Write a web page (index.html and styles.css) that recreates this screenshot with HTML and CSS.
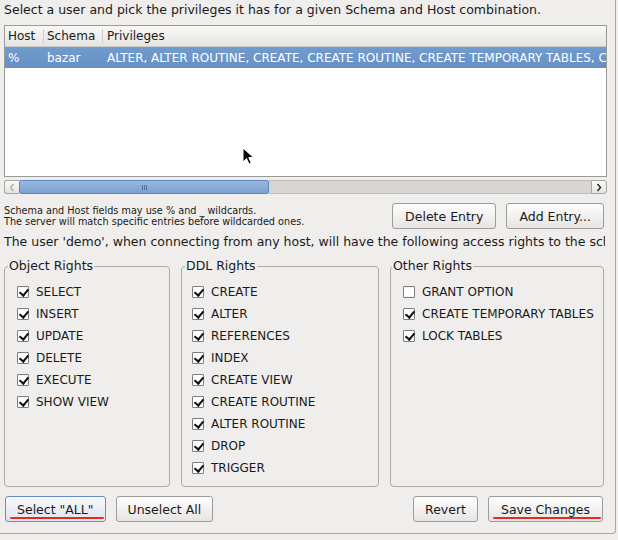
FILE: index.html
```html
<!DOCTYPE html>
<html>
<head>
<meta charset="utf-8">
<link rel="stylesheet" href="styles.css">
</head>
<body>
<div class="frame">
  <p class="intro">Select a user and pick the privileges it has for a given Schema and Host combination.</p>

  <div class="list">
    <div class="list-head">
      <div class="col col-host">Host</div>
      <div class="col col-schema">Schema</div>
      <div class="col col-priv">Privileges</div>
    </div>
    <div class="list-row selected">
      <div class="col col-host">%</div>
      <div class="col col-schema">bazar</div>
      <div class="col col-priv">ALTER, ALTER ROUTINE, CREATE, CREATE ROUTINE, CREATE TEMPORARY TABLES, CREATE VIEW, DELETE</div>
    </div>
    <svg class="cursor" width="13" height="19" viewBox="0 0 13 19"><path d="M1 1 L1 15 L4.5 11.5 L7 17 L9.2 16 L6.8 10.6 L11.5 10.6 Z" fill="#000" stroke="#fff" stroke-width="1" stroke-linejoin="round"/></svg>
  </div>

  <div class="hscroll">
    <div class="sb-btn sb-left"><svg width="6" height="9" viewBox="0 0 6 9"><path d="M4.5 1 L1.5 4.5 L4.5 8" fill="none" stroke="#a9a9a9" stroke-width="1.2"/></svg></div>
    <div class="sb-thumb"><span class="grip"></span><span class="grip"></span><span class="grip"></span></div>
    <div class="sb-trough"></div>
    <div class="sb-btn sb-right"><svg width="6" height="9" viewBox="0 0 6 9"><path d="M1.5 1 L4.5 4.5 L1.5 8" fill="none" stroke="#222" stroke-width="1.4"/></svg></div>
  </div>

  <div class="entry-row">
    <p class="hint">Schema and Host fields may use % and _ wildcards.<br>The server will match specific entries before wildcarded ones.</p>
    <div class="btns">
      <button class="btn">Delete Entry</button>
      <button class="btn">Add Entry...</button>
    </div>
  </div>

  <p class="summary">The user 'demo', when connecting from any host, will have the following access rights to the schema 'bazar':</p>

  <div class="groups">
    <fieldset class="group g-object">
      <legend>Object Rights</legend>
      <label class="chk"><span class="box on"></span>SELECT</label>
      <label class="chk"><span class="box on"></span>INSERT</label>
      <label class="chk"><span class="box on"></span>UPDATE</label>
      <label class="chk"><span class="box on"></span>DELETE</label>
      <label class="chk"><span class="box on"></span>EXECUTE</label>
      <label class="chk"><span class="box on"></span>SHOW VIEW</label>
    </fieldset>
    <fieldset class="group g-ddl">
      <legend>DDL Rights</legend>
      <label class="chk"><span class="box on"></span>CREATE</label>
      <label class="chk"><span class="box on"></span>ALTER</label>
      <label class="chk"><span class="box on"></span>REFERENCES</label>
      <label class="chk"><span class="box on"></span>INDEX</label>
      <label class="chk"><span class="box on"></span>CREATE VIEW</label>
      <label class="chk"><span class="box on"></span>CREATE ROUTINE</label>
      <label class="chk"><span class="box on"></span>ALTER ROUTINE</label>
      <label class="chk"><span class="box on"></span>DROP</label>
      <label class="chk"><span class="box on"></span>TRIGGER</label>
    </fieldset>
    <fieldset class="group g-other">
      <legend>Other Rights</legend>
      <label class="chk"><span class="box"></span>GRANT OPTION</label>
      <label class="chk"><span class="box on"></span>CREATE TEMPORARY TABLES</label>
      <label class="chk"><span class="box on"></span>LOCK TABLES</label>
    </fieldset>
  </div>

  <div class="bottom-bar">
    <div class="btns">
      <button class="btn btn-sm focused marked">Select "ALL"</button>
      <button class="btn btn-sm">Unselect All</button>
    </div>
    <div class="btns">
      <button class="btn btn-sm">Revert</button>
      <button class="btn marked">Save Changes</button>
    </div>
  </div>
</div>
</body>
</html>
```

FILE: styles.css
```css
* { box-sizing: border-box; }

html, body {
  margin: 0;
  padding: 0;
  background: #efeeec;
  font-family: "DejaVu Sans", sans-serif;
  font-size: 12.5px;
  color: #1a1a1a;
  overflow: hidden;
}

.frame {
  width: 616px;
  height: 534px;
  padding: 0 8px 0 4px;
  border-right: 1px solid #a9a7a4;
  border-bottom: 1px solid #a9a7a4;
  border-bottom-right-radius: 4px;
  overflow: hidden;
}

.intro {
  margin: 1px 0 0;
  line-height: 17px;
  white-space: nowrap;
}

.list {
  position: relative;
  margin-top: 7px;
  height: 152px;
  border: 1px solid #9c9a97;
  background: #fff;
  overflow: hidden;
  font-size: 12px;
}

.list-head, .list-row {
  display: flex;
  height: 21px;
  align-items: center;
  white-space: nowrap;
}

.list-head {
  background: linear-gradient(#f8f8f7, #e6e5e3);
  border-bottom: 1px solid #cfcdca;
}

.list-head .col + .col {
  border-left: 1px solid #cfcdca;
  height: 14px;
  line-height: 14px;
}

.col { flex: none; padding-left: 3px; }
.col-host { width: 38px; }
.col-schema { width: 59px; }
.col-priv { flex: 1; min-width: 0; padding-left: 4px; overflow: hidden; }

.list-row .col-schema { padding-left: 4px; }
.list-row .col-priv { padding-left: 5px; }

.list-row.selected {
  background: linear-gradient(#729bcd, #6690c5);
  color: #fff;
}

.cursor {
  position: absolute;
  left: 237px;
  top: 121px;
}

.hscroll {
  display: flex;
  margin-top: 3px;
  height: 14px;
}

.sb-btn {
  flex: none;
  width: 16px;
  height: 14px;
  display: flex;
  align-items: center;
  justify-content: center;
  background: linear-gradient(#fbfbfa, #e3e2e0);
  border: 1px solid #a8a6a3;
}
.sb-left { border-radius: 3px 0 0 3px; width: 15px; border-right: none; }
.sb-right { border-radius: 0 3px 3px 0; }

.sb-thumb {
  flex: none;
  width: 250px;
  height: 14px;
  background: linear-gradient(#9ab8e0, #7aa1d3);
  border: 1px solid #5f87bd;
  border-radius: 2px;
  display: flex;
  align-items: center;
  justify-content: center;
  gap: 1px;
}
.grip {
  width: 1px;
  height: 5px;
  background: #4b6f9f;
}

.sb-trough {
  flex: 1;
  background: #d7d6d3;
  border-top: 1px solid #bdbbb8;
  border-bottom: 1px solid #bdbbb8;
}

.entry-row {
  display: flex;
  justify-content: space-between;
  align-items: center;
  margin-top: 9px;
  padding-right: 3px;
}

.hint {
  margin: 0;
  font-size: 9.7px;
  line-height: 11px;
}

.btns {
  display: flex;
  gap: 10px;
}

.btn {
  position: relative;
  height: 26px;
  padding: 0 12px;
  font-family: "DejaVu Sans", sans-serif;
  font-size: 12.5px;
  color: #1a1a1a;
  background: linear-gradient(#fdfdfd, #e6e5e3);
  border: 1px solid #9f9d9a;
  border-radius: 3px;
}

.btn-sm { padding: 0 11px; }

.btn.focused {
  border-color: #6a8fc3;
  background: linear-gradient(#f6f8fb, #dfe4ec);
}

.btn.marked::after {
  content: "";
  position: absolute;
  left: 4px;
  right: 1px;
  bottom: 2px;
  height: 2px;
  background: #e52a25;
  border-radius: 1px;
}

.summary {
  margin: 5px 2px 0 0;
  line-height: 16px;
  white-space: nowrap;
  overflow: hidden;
}

.groups {
  display: flex;
  gap: 11px;
  margin-top: 9px;
  height: 228px;
}

.group {
  margin: 0;
  padding: 8px 0 0 12px;
  border: 1px solid #aeacaa;
  border-radius: 4px;
  display: flex;
  flex-direction: column;
  min-width: 0;
}
.g-object { width: 166px; }
.g-ddl { width: 198px; padding-left: 10px; }
.g-other { width: 214px; }

.group legend {
  padding: 0 1px;
  margin-left: -9px;
  line-height: 14px;
  font-size: 12.5px;
}
.g-ddl legend { margin-left: -7px; }
.g-other legend { margin-left: -11px; }

.chk {
  display: flex;
  align-items: center;
  height: 22px;
  white-space: nowrap;
  font-size: 12px;
}

.box {
  flex: none;
  width: 12px;
  height: 12px;
  margin-right: 7px;
  border: 1px solid #7f7d7a;
  background: #fff;
  border-radius: 1px;
  position: relative;
}

.box.on::after {
  content: "";
  position: absolute;
  left: 3px;
  top: 0px;
  width: 4px;
  height: 7px;
  border-right: 2px solid #111;
  border-bottom: 2px solid #111;
  transform: rotate(40deg);
}

.bottom-bar {
  display: flex;
  justify-content: space-between;
  margin-top: 9px;
  padding: 0 4px 0 1px;
}
```
